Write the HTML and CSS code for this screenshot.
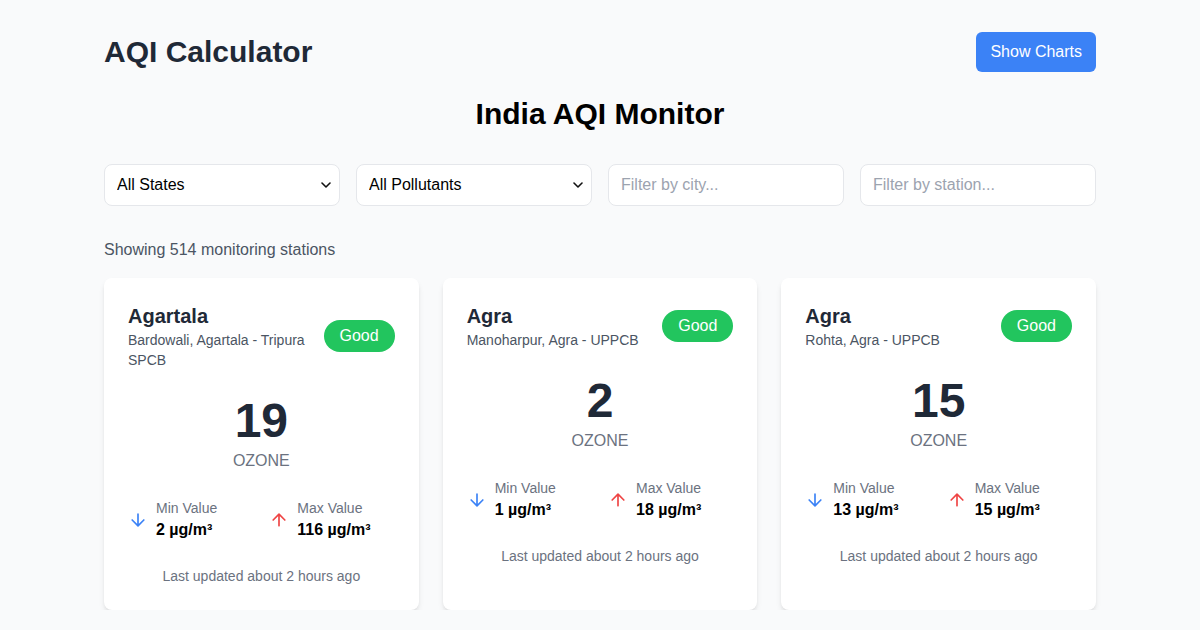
FILE: index.html
```html
<!DOCTYPE html>
<html lang="en">
<head>
<meta charset="utf-8">
<title>AQI Calculator</title>
<link rel="stylesheet" href="styles.css">
</head>
<body>
<div class="container">
  <header class="header">
    <h1 class="logo">AQI Calculator</h1>
    <button class="btn">Show Charts</button>
  </header>
  <h2 class="page-title">India AQI Monitor</h2>
  <div class="filters">
    <div class="select-wrap">
      <select class="control"><option>All States</option></select>
      <svg class="chev" width="10" height="6" viewBox="0 0 10 6"><path d="M1 1l4 4 4-4" fill="none" stroke="#111" stroke-width="1.6" stroke-linecap="round" stroke-linejoin="round"/></svg>
    </div>
    <div class="select-wrap">
      <select class="control"><option>All Pollutants</option></select>
      <svg class="chev" width="10" height="6" viewBox="0 0 10 6"><path d="M1 1l4 4 4-4" fill="none" stroke="#111" stroke-width="1.6" stroke-linecap="round" stroke-linejoin="round"/></svg>
    </div>
    <input class="control" type="text" placeholder="Filter by city...">
    <input class="control" type="text" placeholder="Filter by station...">
  </div>
  <p class="count">Showing 514 monitoring stations</p>
  <div class="cards">
    <div class="card">
      <div class="card-head">
        <div class="card-info">
          <div class="city">Agartala</div>
          <div class="station">Bardowali, Agartala - Tripura SPCB</div>
        </div>
        <span class="badge">Good</span>
      </div>
      <div class="value">19</div>
      <div class="pollutant">OZONE</div>
      <div class="stats">
        <div class="stat">
          <svg class="ico down" width="20" height="20" viewBox="0 0 24 24"><path d="M12 5v14M19 12l-7 7-7-7"/></svg>
          <div><div class="stat-label">Min Value</div><div class="stat-value">2 µg/m³</div></div>
        </div>
        <div class="stat">
          <svg class="ico up" width="20" height="20" viewBox="0 0 24 24"><path d="M12 19V5M5 12l7-7 7 7"/></svg>
          <div><div class="stat-label">Max Value</div><div class="stat-value">116 µg/m³</div></div>
        </div>
      </div>
      <div class="updated">Last updated about 2 hours ago</div>
    </div>
    <div class="card">
      <div class="card-head">
        <div class="card-info">
          <div class="city">Agra</div>
          <div class="station">Manoharpur, Agra - UPPCB</div>
        </div>
        <span class="badge">Good</span>
      </div>
      <div class="value">2</div>
      <div class="pollutant">OZONE</div>
      <div class="stats">
        <div class="stat">
          <svg class="ico down" width="20" height="20" viewBox="0 0 24 24"><path d="M12 5v14M19 12l-7 7-7-7"/></svg>
          <div><div class="stat-label">Min Value</div><div class="stat-value">1 µg/m³</div></div>
        </div>
        <div class="stat">
          <svg class="ico up" width="20" height="20" viewBox="0 0 24 24"><path d="M12 19V5M5 12l7-7 7 7"/></svg>
          <div><div class="stat-label">Max Value</div><div class="stat-value">18 µg/m³</div></div>
        </div>
      </div>
      <div class="updated">Last updated about 2 hours ago</div>
    </div>
    <div class="card">
      <div class="card-head">
        <div class="card-info">
          <div class="city">Agra</div>
          <div class="station">Rohta, Agra - UPPCB</div>
        </div>
        <span class="badge">Good</span>
      </div>
      <div class="value">15</div>
      <div class="pollutant">OZONE</div>
      <div class="stats">
        <div class="stat">
          <svg class="ico down" width="20" height="20" viewBox="0 0 24 24"><path d="M12 5v14M19 12l-7 7-7-7"/></svg>
          <div><div class="stat-label">Min Value</div><div class="stat-value">13 µg/m³</div></div>
        </div>
        <div class="stat">
          <svg class="ico up" width="20" height="20" viewBox="0 0 24 24"><path d="M12 19V5M5 12l7-7 7 7"/></svg>
          <div><div class="stat-label">Max Value</div><div class="stat-value">15 µg/m³</div></div>
        </div>
      </div>
      <div class="updated">Last updated about 2 hours ago</div>
    </div>
  </div>
</div>
</body>
</html>
```
FILE: styles.css
```css
* { box-sizing: border-box; }
body {
  margin: 0;
  background: #f9fafb;
  font-family: "Liberation Sans", Arial, sans-serif;
  color: #111827;
}
.container {
  max-width: 1024px;
  margin: 0 auto;
  padding: 0 16px;
}
.header {
  display: flex;
  justify-content: space-between;
  align-items: center;
  padding-top: 32px;
  margin-bottom: 24px;
}
.logo {
  margin: 0;
  font-size: 30px;
  line-height: 36px;
  font-weight: 700;
  color: #1f2937;
}
.btn {
  background: #3b82f6;
  color: #fff;
  border: none;
  border-radius: 6px;
  padding: 8px 14px;
  font: 16px/24px "Liberation Sans", Arial, sans-serif;
  white-space: nowrap;
}
.page-title {
  margin: 0 0 32px;
  text-align: center;
  font-size: 30px;
  line-height: 36px;
  font-weight: 700;
  color: #000;
}
.filters {
  display: grid;
  grid-template-columns: repeat(4, 1fr);
  gap: 16px;
  margin-bottom: 32px;
}
.select-wrap { position: relative; }
.control {
  width: 100%;
  height: 42px;
  padding: 8px 12px;
  border: 1px solid #e5e7eb;
  border-radius: 8px;
  background: #fff;
  font: 16px/24px "Liberation Sans", Arial, sans-serif;
  color: #000;
  outline: none;
  appearance: none;
  -webkit-appearance: none;
}
.control::placeholder { color: #9ca3af; }
.chev {
  position: absolute;
  right: 9px;
  top: 18px;
  pointer-events: none;
}
.count {
  margin: 0 0 16px;
  font-size: 16px;
  line-height: 24px;
  color: #4b5563;
}
.cards {
  display: grid;
  grid-template-columns: repeat(3, 1fr);
  gap: 24px;
}
.card {
  background: #fff;
  border-radius: 8px;
  padding: 24px;
  box-shadow: 0 4px 6px -1px rgba(0,0,0,0.1), 0 2px 4px -2px rgba(0,0,0,0.1);
}
.card-head {
  display: flex;
  justify-content: space-between;
  align-items: center;
  margin-bottom: 27px;
}
.card-info { min-width: 0; }
.city {
  font-size: 20px;
  line-height: 28px;
  font-weight: 700;
  color: #1f2937;
}
.station {
  font-size: 14px;
  line-height: 20px;
  color: #4b5563;
}
.badge {
  flex-shrink: 0;
  background: #22c55e;
  color: #fff;
  border-radius: 9999px;
  padding: 4px 16px;
  font-size: 16px;
  line-height: 24px;
}
.value {
  text-align: center;
  font-size: 48px;
  line-height: 48px;
  font-weight: 700;
  color: #1f2937;
}
.pollutant {
  margin-top: 4px;
  text-align: center;
  font-size: 16px;
  line-height: 24px;
  color: #6b7280;
}
.stats {
  display: grid;
  grid-template-columns: 1fr 1fr;
  gap: 16px;
  margin-top: 25px;
}
.stat {
  display: flex;
  align-items: center;
  gap: 8px;
}
.ico {
  flex-shrink: 0;
  fill: none;
  stroke-width: 2;
  stroke-linecap: round;
  stroke-linejoin: round;
}
.ico.down { stroke: #3b82f6; }
.ico.up { stroke: #ef4444; }
.stat-label {
  font-size: 14px;
  line-height: 20px;
  color: #6b7280;
}
.stat-value {
  font-size: 16px;
  line-height: 24px;
  font-weight: 700;
  color: #000;
}
.updated {
  margin-top: 24px;
  text-align: center;
  font-size: 14px;
  line-height: 20px;
  color: #6b7280;
}
```
